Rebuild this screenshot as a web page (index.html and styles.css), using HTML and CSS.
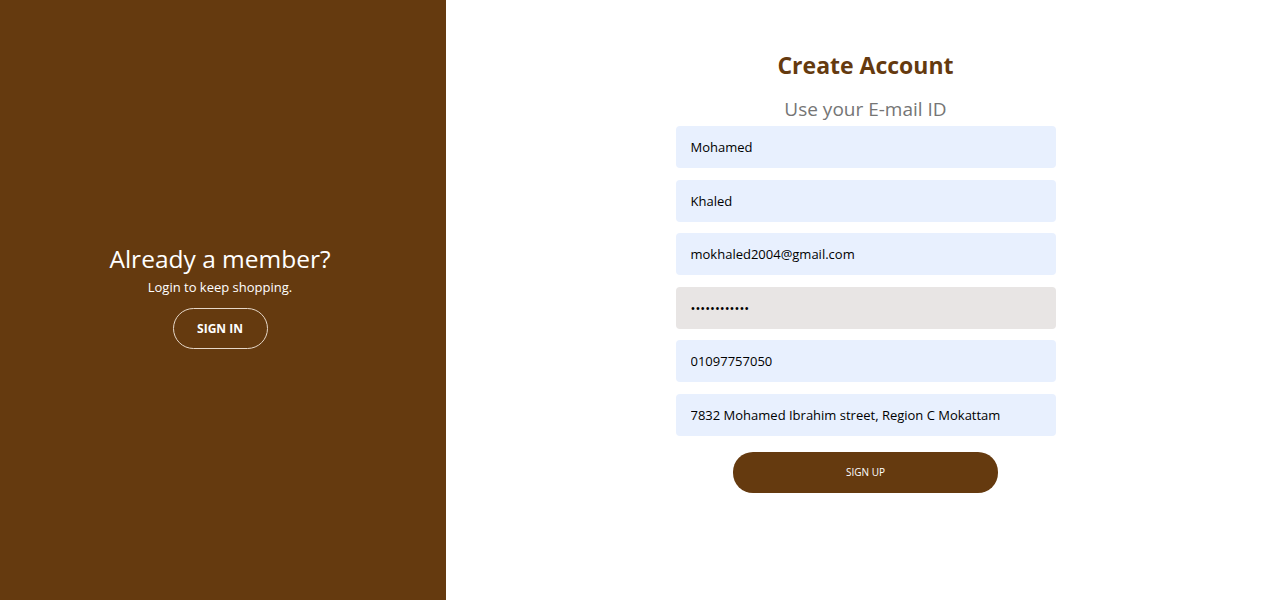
FILE: index.html
```html
<!DOCTYPE html>
<html>
<head>
<meta charset="utf-8">
<link rel="stylesheet" href="styles.css">
</head>
<body>
<div class="page">
  <aside class="side">
    <h2 class="side-title">Already a member?</h2>
    <p class="side-text">Login to keep shopping.</p>
    <button class="btn-ghost">SIGN IN</button>
  </aside>
  <main class="main">
    <form class="form">
      <h1 class="title">Create Account</h1>
      <p class="subtitle">Use your E-mail ID</p>
      <input class="field" type="text" value="Mohamed">
      <input class="field" type="text" value="Khaled">
      <input class="field" type="text" value="mokhaled2004@gmail.com">
      <input class="field field-pw" type="password" value="mohamed12345">
      <input class="field" type="text" value="01097757050">
      <input class="field" type="text" value="7832 Mohamed Ibrahim street, Region C Mokattam">
      <button class="btn-primary" type="button">SIGN UP</button>
    </form>
  </main>
</div>
</body>
</html>
```
FILE: styles.css
```css
* { box-sizing: border-box; }
html, body { margin: 0; padding: 0; }
body {
  font-family: "Open Sans", "Noto Sans", sans-serif;
  background: #fff;
}
.page {
  display: flex;
  height: 600px;
  width: 1280px;
}
.side {
  width: 446px;
  background: #653a0f;
  color: #fff;
  display: flex;
  flex-direction: column;
  align-items: center;
  justify-content: center;
  padding-bottom: 8px;
  padding-right: 6px;
}
.side-title {
  margin: 0;
  font-size: 24.5px;
  font-weight: 500;
  line-height: 32px;
}
.side-text {
  margin: 2px 0 11px;
  font-size: 13px;
  line-height: 20px;
}
.btn-ghost {
  width: 95px;
  height: 41px;
  border: 1px solid #e6d7c8;
  border-radius: 21px;
  background: transparent;
  color: #fff;
  font-family: inherit;
  font-size: 12px;
  font-weight: 700;
}
.main {
  flex: 1;
  display: flex;
  justify-content: center;
}
.form {
  width: 380px;
  display: flex;
  flex-direction: column;
  align-items: center;
  padding-top: 49px;
  margin-left: 5px;
}
.title {
  margin: 0;
  font-size: 23px;
  font-weight: 700;
  color: #653a0f;
  line-height: 32px;
}
.subtitle {
  margin: 16px 0 0;
  font-size: 19px;
  color: #757575;
  line-height: 24px;
}
.field {
  width: 380px;
  height: 42px;
  margin-top: 11.6px;
  border: none;
  border-radius: 4px;
  background: #e8f0fe;
  padding: 0 15px;
  font-family: inherit;
  font-size: 13px;
  color: #000;
  outline: none;
}
.subtitle + .field { margin-top: 5px; }
.field-pw { background: #e8e5e4; }
.btn-primary {
  margin-top: 16px;
  width: 265px;
  height: 41px;
  border: none;
  border-radius: 20px;
  background: #653a0f;
  color: #fff;
  font-family: inherit;
  font-size: 10px;
}
```
